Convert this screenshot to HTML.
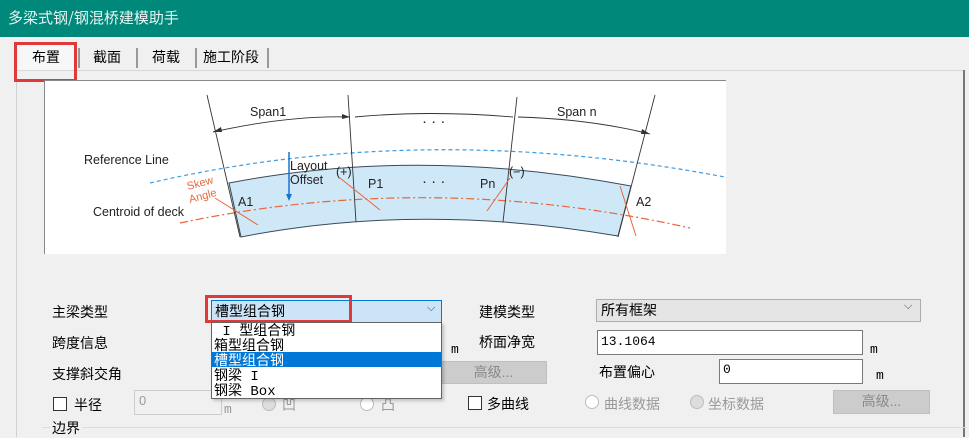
<!DOCTYPE html>
<html><head><meta charset="utf-8"><style>
*{margin:0;padding:0;box-sizing:border-box}
body{width:969px;height:437px;background:#f0f0f0;position:relative;overflow:hidden;font-family:"Liberation Sans","Noto Sans CJK SC",sans-serif;font-size:14px;color:#000}
.a{position:absolute;white-space:nowrap}
.t{font-family:"Noto Sans CJK SC","WenQuanYi Zen Hei",sans-serif;font-size:14px}
.m{font-family:"Liberation Mono","Noto Sans CJK SC",monospace;font-size:13px}
.box{position:absolute;background:#fff;border:1px solid #7a7a7a}
.btn{position:absolute;background:#cccccc;border:1px solid #bfbfbf;color:#8a8a8a;text-align:center;font-size:14px}
.cb{position:absolute;width:14px;height:14px;border:1px solid #333;background:#fff}
.rd{position:absolute;width:14px;height:14px;border:1px solid #bcbcbc;border-radius:50%;background:#fff}
.li div{height:15px;line-height:15px;overflow:visible}
</style></head><body>
<div class="a" style="left:0;top:0;width:969px;height:37px;background:#00897b"></div>
<div class="a t" style="left:8px;top:7px;color:#e8f4f2;font-size:15px">多梁式钢/钢混桥建模助手</div>
<!-- tabs -->
<div class="a" style="left:16px;top:70px;width:948px;height:1px;background:#d8d8d8"></div>
<div class="a" style="left:16px;top:70px;width:1px;height:367px;background:#d0d0d0"></div>
<div class="a" style="left:963px;top:70px;width:2px;height:367px;background:#777"></div>
<div class="a" style="left:18px;top:42px;width:60px;height:28px;background:#f7f7f7"></div>
<div class="a t" style="left:32px;top:47px">布置</div>
<div class="a" style="left:78px;top:48px;width:2px;height:20px;background:#999"></div>
<div class="a t" style="left:93px;top:47px">截面</div>
<div class="a" style="left:136px;top:48px;width:2px;height:20px;background:#999"></div>
<div class="a t" style="left:152px;top:47px">荷载</div>
<div class="a" style="left:195px;top:48px;width:2px;height:20px;background:#999"></div>
<div class="a t" style="left:203px;top:47px">施工阶段</div>
<div class="a" style="left:267px;top:48px;width:2px;height:20px;background:#999"></div>
<div class="a" style="left:14px;top:42px;width:63px;height:40px;border:3px solid #e0393a"></div>
<!-- diagram -->
<svg class="a" style="left:44px;top:80px" width="682" height="174" viewBox="44 80 682 174">
<rect x="44" y="80" width="682" height="174" fill="#fff"/>
<line x1="44.5" y1="80" x2="44.5" y2="254" stroke="#888"/>
<line x1="44" y1="80.5" x2="726" y2="80.5" stroke="#888"/>
<path d="M229,183 Q420,146 631,186 L618,236 Q420,202 241,237 Z" fill="#cfe8f8" stroke="#3a4a5a" stroke-width="1"/>
<path d="M150,183 Q430,118 740,180" fill="none" stroke="#3d9be0" stroke-width="1.2" stroke-dasharray="4,3"/>
<path d="M180,223 Q430,170 690,228" fill="none" stroke="#e8663a" stroke-width="1.2" stroke-dasharray="8,3,2,3"/>
<g stroke="#333" stroke-width="0.9" fill="none">
<line x1="207" y1="95" x2="240" y2="237"/>
<line x1="348" y1="95" x2="356" y2="222"/>
<line x1="517" y1="97" x2="503" y2="222"/>
<line x1="655" y1="95" x2="618" y2="237"/>
<path d="M213,132 Q290,115 350,117"/>
<path d="M355,117 Q430,110 513,117"/>
<path d="M518,117 Q590,119 650,134"/>
</g>
<g fill="#333"><path d="M213,132 l8,-5 l1,5z"/><path d="M350,117 l-8,-3 l0,5z"/><path d="M650,134 l-8,-5 l-1,5z"/></g>
<g stroke="#e8663a" stroke-width="1"><line x1="215" y1="198" x2="258" y2="225"/><line x1="340" y1="178" x2="380" y2="210"/><line x1="487" y1="211" x2="510" y2="178"/><line x1="620" y1="186" x2="636" y2="236"/></g>
<line x1="289" y1="152" x2="289" y2="197" stroke="#1a73d0" stroke-width="1.5"/>
<path d="M289,201 l-3,-7 l6,0z" fill="#1a73d0"/>
<g font-family="Liberation Sans,sans-serif" font-size="12.5" fill="#222">
<text x="250" y="116">Span1</text><text x="557" y="116">Span n</text>
<text x="422" y="126" font-size="15">· · ·</text><text x="422" y="186" font-size="15">· · ·</text>
<text x="84" y="164">Reference Line</text><text x="93" y="216">Centroid of deck</text>
<text x="290" y="170">Layout</text><text x="290" y="184">Offset</text>
<text x="336" y="176">(+)</text><text x="368" y="188">P1</text><text x="480" y="188">Pn</text><text x="509" y="176">(−)</text>
<text x="238" y="206">A1</text><text x="636" y="206">A2</text>
<text x="188" y="190" fill="#e8663a" font-size="11" transform="rotate(-15 188 190)">Skew</text>
<text x="190" y="203" fill="#e8663a" font-size="11" transform="rotate(-15 190 203)">Angle</text>
</g>
</svg>
<!-- form -->
<div class="a t" style="left:52px;top:302px">主梁类型</div>
<div class="a t" style="left:52px;top:333px">跨度信息</div>
<div class="a t" style="left:52px;top:364px">支撑斜交角</div>
<div class="cb" style="left:53px;top:397px"></div><div class="a t" style="left:74px;top:395px">半径</div>
<div class="a" style="left:134px;top:390px;width:88px;height:25px;border:1px solid #ccc;background:#f0f0f0;color:#999;font-size:13px;padding:2px 4px">0</div>
<div class="a m" style="left:224px;top:402px;color:#999">m</div>
<div class="rd" style="left:262px;top:397px;background:#ddd"></div><div class="a t" style="left:282px;top:395px;color:#999">凹</div>
<div class="rd" style="left:360px;top:397px"></div><div class="a t" style="left:381px;top:395px;color:#999">凸</div>
<div class="a" style="left:42px;top:427px;width:925px;height:1px;background:#dcdcdc"></div>
<div class="a t" style="left:50px;top:418px;background:#f0f0f0;padding:0 2px">边界</div>
<div class="a m" style="left:451px;top:342px">m</div>
<div class="btn" style="left:440px;top:361px;width:107px;height:23px">高级...</div>
<div class="a t" style="left:479px;top:302px">建模类型</div>
<div class="a t" style="left:479px;top:332px">桥面净宽</div>
<div class="a t" style="left:599px;top:362px">布置偏心</div>
<div class="cb" style="left:468px;top:396px"></div><div class="a t" style="left:487px;top:394px">多曲线</div>
<div class="rd" style="left:585px;top:395px"></div><div class="a t" style="left:604px;top:394px;color:#999">曲线数据</div>
<div class="rd" style="left:690px;top:395px;background:#ddd"></div><div class="a t" style="left:708px;top:394px;color:#999">坐标数据</div>
<div class="btn" style="left:833px;top:390px;width:97px;height:24px">高级...</div>
<div class="a" style="left:596px;top:299px;width:325px;height:23px;background:#e5e5e5;border:1px solid #adadad"></div>
<div class="a t" style="left:601px;top:300px">所有框架</div>
<div class="a" style="left:904px;top:300px;font-size:11px;color:#444">⌵</div>
<div class="box" style="left:597px;top:330px;width:266px;height:25px"></div>
<div class="a m" style="left:601px;top:334px">13.1064</div>
<div class="a m" style="left:870px;top:342px">m</div>
<div class="box" style="left:719px;top:359px;width:144px;height:25px"></div>
<div class="a m" style="left:723px;top:362px">0</div>
<div class="a m" style="left:876px;top:368px">m</div>
<!-- combo -->
<div class="a" style="left:211px;top:300px;width:231px;height:23px;background:#cce4f7;border:1px solid #0078d7"></div>
<div class="a t" style="left:215px;top:301px">槽型组合钢</div>
<div class="a" style="left:427px;top:302px;font-size:11px;color:#444">⌵</div>
<div class="a" style="left:205px;top:295px;width:147px;height:28px;border:3px solid #e0393a"></div>
<div class="a" style="left:211px;top:322px;width:231px;height:77px;background:#fff;border:1px solid #646464;box-shadow:2px 2px 3px rgba(0,0,0,.2)"></div>
<div class="a" style="left:212px;top:352px;width:229px;height:15px;background:#0078d7"></div>
<div class="a li" style="left:214px;top:325px;font-family:'Liberation Mono','Noto Sans CJK SC',monospace;font-size:14px">
<div>&nbsp;I 型组合钢</div><div>箱型组合钢</div><div style="color:#fff">槽型组合钢</div><div>钢梁 I</div><div>钢梁 Box</div></div>
</body></html>
